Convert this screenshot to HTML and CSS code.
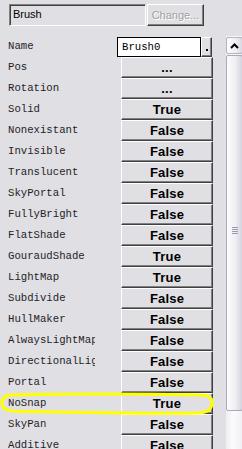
FILE: index.html
```html
<!DOCTYPE html>
<html lang="en">
<head>
    <meta charset="UTF-8">
    <title>Brush Properties</title>
    <link rel="stylesheet" href="styles.css">
</head>
<body>
    <div class="header">
        <div class="name-field">Brush</div>
        <button class="change-btn" disabled>Change...</button>
    </div>

    <div class="main">
        <div class="props">
            <div class="row">
                <span class="label">Name</span>
                <span class="name-input">Brush0</span>
                <button class="dot-btn"><span class="dot"></span></button>
            </div>
            <div class="row"><span class="label">Pos</span><button class="val">...</button></div>
            <div class="row"><span class="label">Rotation</span><button class="val">...</button></div>
            <div class="row"><span class="label">Solid</span><button class="val">True</button></div>
            <div class="row"><span class="label">Nonexistant</span><button class="val">False</button></div>
            <div class="row"><span class="label">Invisible</span><button class="val">False</button></div>
            <div class="row"><span class="label">Translucent</span><button class="val">False</button></div>
            <div class="row"><span class="label">SkyPortal</span><button class="val">False</button></div>
            <div class="row"><span class="label">FullyBright</span><button class="val">False</button></div>
            <div class="row"><span class="label">FlatShade</span><button class="val">False</button></div>
            <div class="row"><span class="label">GouraudShade</span><button class="val">True</button></div>
            <div class="row"><span class="label">LightMap</span><button class="val">True</button></div>
            <div class="row"><span class="label">Subdivide</span><button class="val">False</button></div>
            <div class="row"><span class="label">HullMaker</span><button class="val">False</button></div>
            <div class="row"><span class="label">AlwaysLightMap</span><button class="val">False</button></div>
            <div class="row"><span class="label">DirectionalLight</span><button class="val">False</button></div>
            <div class="row"><span class="label">Portal</span><button class="val">False</button></div>
            <div class="row"><span class="label">NoSnap</span><button class="val">True</button></div>
            <div class="row"><span class="label">SkyPan</span><button class="val">False</button></div>
            <div class="row"><span class="label">Additive</span><button class="val">False</button></div>
        </div>

        <div class="scrollbar">
            <div class="sb-up">
                <svg width="9" height="6" viewBox="0 0 9 6">
                    <path d="M1 5 L4.5 1.5 L8 5" fill="none" stroke="#000" stroke-width="2"/>
                </svg>
            </div>
            <div class="sb-thumb">
                <span class="grip"></span>
            </div>
        </div>
    </div>

    <!-- hand-drawn marker around the NoSnap row -->
    <svg class="marker" width="242" height="449" viewBox="0 0 242 449">
        <path d="M12 395 C60 394 150 394 200 395 C210 395 213 399 212 404 C211 410 207 413 198 413 C150 414 60 412 12 411 C4 410 2 407 2 403 C2 398 5 395 12 395 Z"
              fill="none" stroke="#ffff00" stroke-width="3"/>
    </svg>
</body>
</html>
```

FILE: styles.css
```css
* { box-sizing: border-box; margin: 0; padding: 0; }
body {
    width: 242px;
    height: 449px;
    overflow: hidden;
    background: #e0dfe3;
    font-family: 'Liberation Sans', Arial, sans-serif;
    font-size: 11px;
    color: #000;
    position: relative;
}
button {
    font-family: inherit;
    background: #e0dfe3;
    cursor: default;
}
.header {
    display: flex;
    padding: 4px 0 0 9px;
    height: 36px;
}
.name-field {
    width: 137px;
    height: 22px;
    padding: 3px 0 0 3px;
    background: #e0dfe3;
    border: 1px solid;
    border-color: #808080 #fff #fff #808080;
    box-shadow: inset 1px 1px #404040;
    font-size: 11px;
}
.change-btn {
    width: 57px;
    height: 22px;
    margin-left: 1px;
    font-size: 11px;
    color: #a0a0a0;
    text-shadow: 1px 1px #fff;
    border: 1px solid;
    border-color: #fff #404040 #404040 #fff;
    box-shadow: inset -1px -1px #808080;
}
.main {
    display: flex;
}
.props {
    width: 213px;
    padding-left: 8px;
}
.row {
    display: flex;
    align-items: center;
    height: 21px;
}
.label {
    width: 87px;
    margin-right: 26px;
    overflow: hidden;
    white-space: nowrap;
    font-family: 'Liberation Mono', 'Courier New', monospace;
    font-size: 8pt;
    color: #1e1e28;
    position: relative;
    top: -1px;
}
.name-input {
    width: 84px;
    height: 20px;
    margin: 1px 0 0 -4px;
    padding: 3px 0 0 4px;
    background: #fff;
    border: 1px solid #000;
    font-family: 'Liberation Mono', 'Courier New', monospace;
    font-size: 8pt;
}
.dot-btn {
    width: 11px;
    height: 20px;
    margin-top: 1px;
    display: flex;
    justify-content: center;
    align-items: flex-end;
    padding-bottom: 5px;
    border: 1px solid;
    border-color: #fff #404040 #404040 #fff;
    box-shadow: inset -1px -1px #808080;
}
.dot {
    width: 2px;
    height: 2px;
    background: #000;
}
.val {
    width: 92px;
    height: 21px;
    font-weight: bold;
    font-size: 13px;
    letter-spacing: 0.2px;
    border: 1px solid;
    border-color: #fff #404040 #404040 #fff;
    box-shadow: inset -1px -1px #808080;
}
.scrollbar {
    width: 17px;
    margin-left: 13px;
    height: 413px;
    padding-top: 1px;
    background: linear-gradient(to right, #eeedf2, #fbfbfc 40%, #f0eff4);
    flex-shrink: 0;
}
.sb-up {
    height: 17px;
    display: flex;
    align-items: center;
    justify-content: center;
    border: 1px solid #b3b3c4;
    border-radius: 2px;
    background: linear-gradient(to right, #fdfdfe, #eeeef3 60%, #d8d8e3);
}
.sb-thumb {
    height: 356px;
    margin-top: 1px;
    display: flex;
    align-items: center;
    justify-content: center;
    border: 1px solid #a9a9ba;
    border-radius: 2px;
    background: linear-gradient(to right, #fdfdfe, #eeeef3 55%, #d4d4e0);
}
.grip {
    width: 6px;
    height: 7px;
    margin-top: -6px;
    background: repeating-linear-gradient(to bottom, #9a9aa8 0 1px, transparent 1px 2px);
}
.marker {
    position: absolute;
    left: 0;
    top: 0;
    pointer-events: none;
}
```
